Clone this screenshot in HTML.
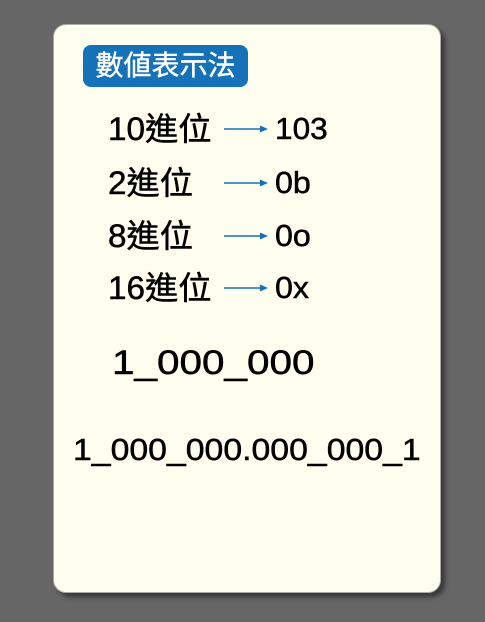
<!DOCTYPE html>
<html><head><meta charset="utf-8"><style>
html,body{margin:0;width:485px;height:622px;background:#666;overflow:hidden}
body{position:relative;font-family:"Liberation Sans","Noto Sans CJK TC",sans-serif;color:#000}
.card{position:absolute;left:53px;top:24px;width:388px;height:569px;background:#fffff0;border-radius:13px;border:1px solid #aaa;box-sizing:border-box;box-shadow:4px 4px 5px rgba(0,0,0,.45)}
.badge{position:absolute;left:83px;top:45px;width:165px;height:42px;background:#1571b8;border-radius:8px;color:#fff;font-size:28px;line-height:42px;text-align:center;-webkit-text-stroke:0.4px #fff}
.t{position:absolute;white-space:nowrap;-webkit-text-stroke:0.5px #000;transform-origin:0 50%}
.l{left:108px;font-size:32px;line-height:36px}
.v{left:275px;font-size:31px;line-height:36px}
.ar{position:absolute;left:224px;width:44px;height:10px}
</style></head><body>
<div class="card"></div>
<div class="badge">數値表示法</div>
<div class="t l" style="top:111px;transform:scaleX(1.04)">10進位</div>
<div class="t l" style="top:165px;transform:scaleX(1.04)">2進位</div>
<div class="t l" style="top:218px;transform:scaleX(1.04)">8進位</div>
<div class="t l" style="top:270px;transform:scaleX(1.04)">16進位</div>
<div class="t v" style="top:111px;transform:scaleX(1.02)">103</div>
<div class="t v" style="top:165px;transform:scaleX(1.04)">0b</div>
<div class="t v" style="top:218px;transform:scaleX(1.04)">0o</div>
<div class="t v" style="top:270px;transform:scaleX(1.04)">0x</div>
<svg class="ar" style="top:124px" viewBox="0 0 44 10"><line x1="0" y1="5" x2="38" y2="5" stroke="#1571b8" stroke-width="1.5"/><path d="M36 1.5L44 5L36 8.5Z" fill="#1571b8"/></svg>
<svg class="ar" style="top:178px" viewBox="0 0 44 10"><line x1="0" y1="5" x2="38" y2="5" stroke="#1571b8" stroke-width="1.5"/><path d="M36 1.5L44 5L36 8.5Z" fill="#1571b8"/></svg>
<svg class="ar" style="top:231px" viewBox="0 0 44 10"><line x1="0" y1="5" x2="38" y2="5" stroke="#1571b8" stroke-width="1.5"/><path d="M36 1.5L44 5L36 8.5Z" fill="#1571b8"/></svg>
<svg class="ar" style="top:283px" viewBox="0 0 44 10"><line x1="0" y1="5" x2="38" y2="5" stroke="#1571b8" stroke-width="1.5"/><path d="M36 1.5L44 5L36 8.5Z" fill="#1571b8"/></svg>
<div class="t" style="left:112px;top:343px;font-size:34px;line-height:40px;transform:scaleX(1.19)">1_000_000</div>
<div class="t" style="left:73px;top:432px;font-size:31px;line-height:36px;transform:scaleX(1.09)">1_000_000.000_000_1</div>
</body></html>
